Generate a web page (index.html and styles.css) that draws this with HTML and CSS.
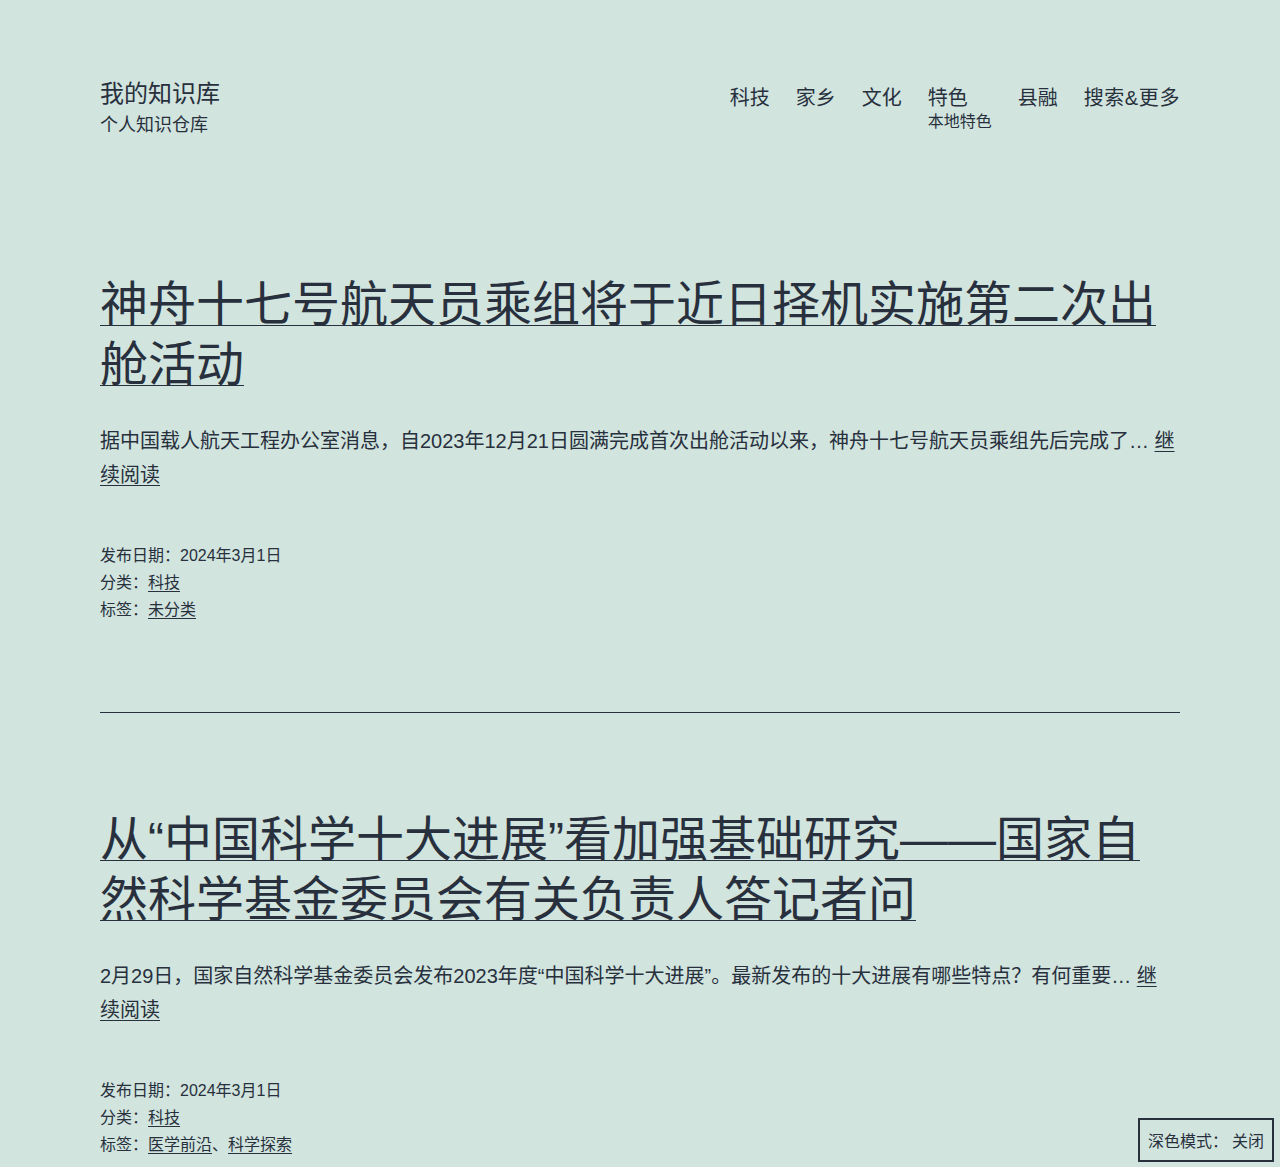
FILE: index.html
```html
<!DOCTYPE html>
<html lang="zh-CN">
<head>
  <meta charset="UTF-8">
  <meta name="viewport" content="width=device-width, initial-scale=1.0">
  <title>我的知识库</title>
  <link rel="stylesheet" href="styles.css">
</head>
<body>

<div class="site">
  <!-- Header -->
  <header class="site-header">
    <div class="branding">
      <p class="site-title"><a href="#">我的知识库</a></p>
      <p class="site-description">个人知识仓库</p>
    </div>
    <nav class="primary-nav">
      <ul>
        <li><a href="#">科技</a></li>
        <li><a href="#">家乡</a></li>
        <li><a href="#">文化</a></li>
        <li><a href="#">特色<span class="menu-desc">本地特色</span></a></li>
        <li><a href="#">县融</a></li>
        <li class="menu-search"><a href="#">搜索&amp;更多</a></li>
      </ul>
    </nav>
  </header>

  <main class="site-main">
    <article class="post">
      <h2 class="entry-title"><a href="#">神舟十七号航天员乘组将于近日择机实施第二次出舱活动</a></h2>
      <p class="entry-excerpt">据中国载人航天工程办公室消息，自2023年12月21日圆满完成首次出舱活动以来，神舟十七号航天员乘组先后完成了… <a href="#">继续阅读</a></p>
      <div class="entry-meta">
        <p>发布日期：2024年3月1日</p>
        <p>分类：<a href="#">科技</a></p>
        <p>标签：<a href="#">未分类</a></p>
      </div>
    </article>

    <hr class="separator">

    <article class="post">
      <h2 class="entry-title"><a href="#">从“中国科学十大进展”看加强基础研究——国家自然科学基金委员会有关负责人答记者问</a></h2>
      <p class="entry-excerpt">2月29日，国家自然科学基金委员会发布2023年度“中国科学十大进展”。最新发布的十大进展有哪些特点？有何重要… <a href="#">继续阅读</a></p>
      <div class="entry-meta">
        <p>发布日期：2024年3月1日</p>
        <p>分类：<a href="#">科技</a></p>
        <p>标签：<a href="#">医学前沿</a>、<a href="#">科学探索</a></p>
      </div>
    </article>
  </main>
</div>

<button class="dark-toggle">深色模式：<span class="toggle-state">关闭</span></button>

</body>
</html>
```

FILE: styles.css
```css
body {
  font-family: "Liberation Sans", "Noto Sans CJK SC", sans-serif;
  margin: 0;
  padding: 0;
  background-color: #d1e4dd;
  color: #28303d;
}

a {
  color: #28303d;
}

p {
  margin: 0;
}

.site {
  width: 1080px;
  margin: 0 auto;
}

.site-header {
  display: flex;
  justify-content: space-between;
  align-items: flex-start;
  padding-top: 78px;
}

.site-title {
  font-size: 24px;
  line-height: 31px;
}

.site-title a {
  text-decoration: none;
}

.site-description {
  font-size: 18px;
  line-height: 25px;
  margin-top: 4px;
}

.primary-nav {
  margin-top: 7px;
}

.primary-nav ul {
  list-style: none;
  margin: 0;
  padding: 0;
  display: flex;
  gap: 26px;
}

.primary-nav a {
  display: block;
  font-size: 20px;
  line-height: 26px;
  text-decoration: none;
}

.menu-search a {
  letter-spacing: 0.6px;
}

.menu-desc {
  display: block;
  font-size: 16px;
  line-height: 20px;
  margin-top: 1px;
}

.site-main {
  padding-top: 137px;
}

.entry-title {
  font-size: 48px;
  line-height: 60px;
  font-weight: normal;
  margin: 0;
}

.entry-title a {
  text-decoration-thickness: 1px;
  text-underline-offset: 4px;
}

.entry-excerpt {
  font-size: 20px;
  line-height: 34px;
  margin-top: 29px;
  padding-right: 4px;
}

.entry-excerpt a {
  text-decoration-thickness: 1px;
  text-underline-offset: 3px;
}

.entry-meta {
  margin-top: 50px;
  font-size: 16px;
  line-height: 27px;
}

.entry-meta a {
  text-decoration-thickness: 1px;
  text-underline-offset: 3px;
}

.separator {
  border: none;
  border-top: 1px solid #28303d;
  margin: 89px 0 97px;
}

.dark-toggle {
  position: fixed;
  right: 6px;
  bottom: 5px;
  width: 136px;
  height: 44px;
  background-color: #d1e4dd;
  color: #28303d;
  border: 2px solid #28303d;
  font-family: "Liberation Sans", "Noto Sans CJK SC", sans-serif;
  font-size: 16px;
  padding: 0;
  cursor: pointer;
}

.toggle-state {
  margin-left: 4px;
}
```
